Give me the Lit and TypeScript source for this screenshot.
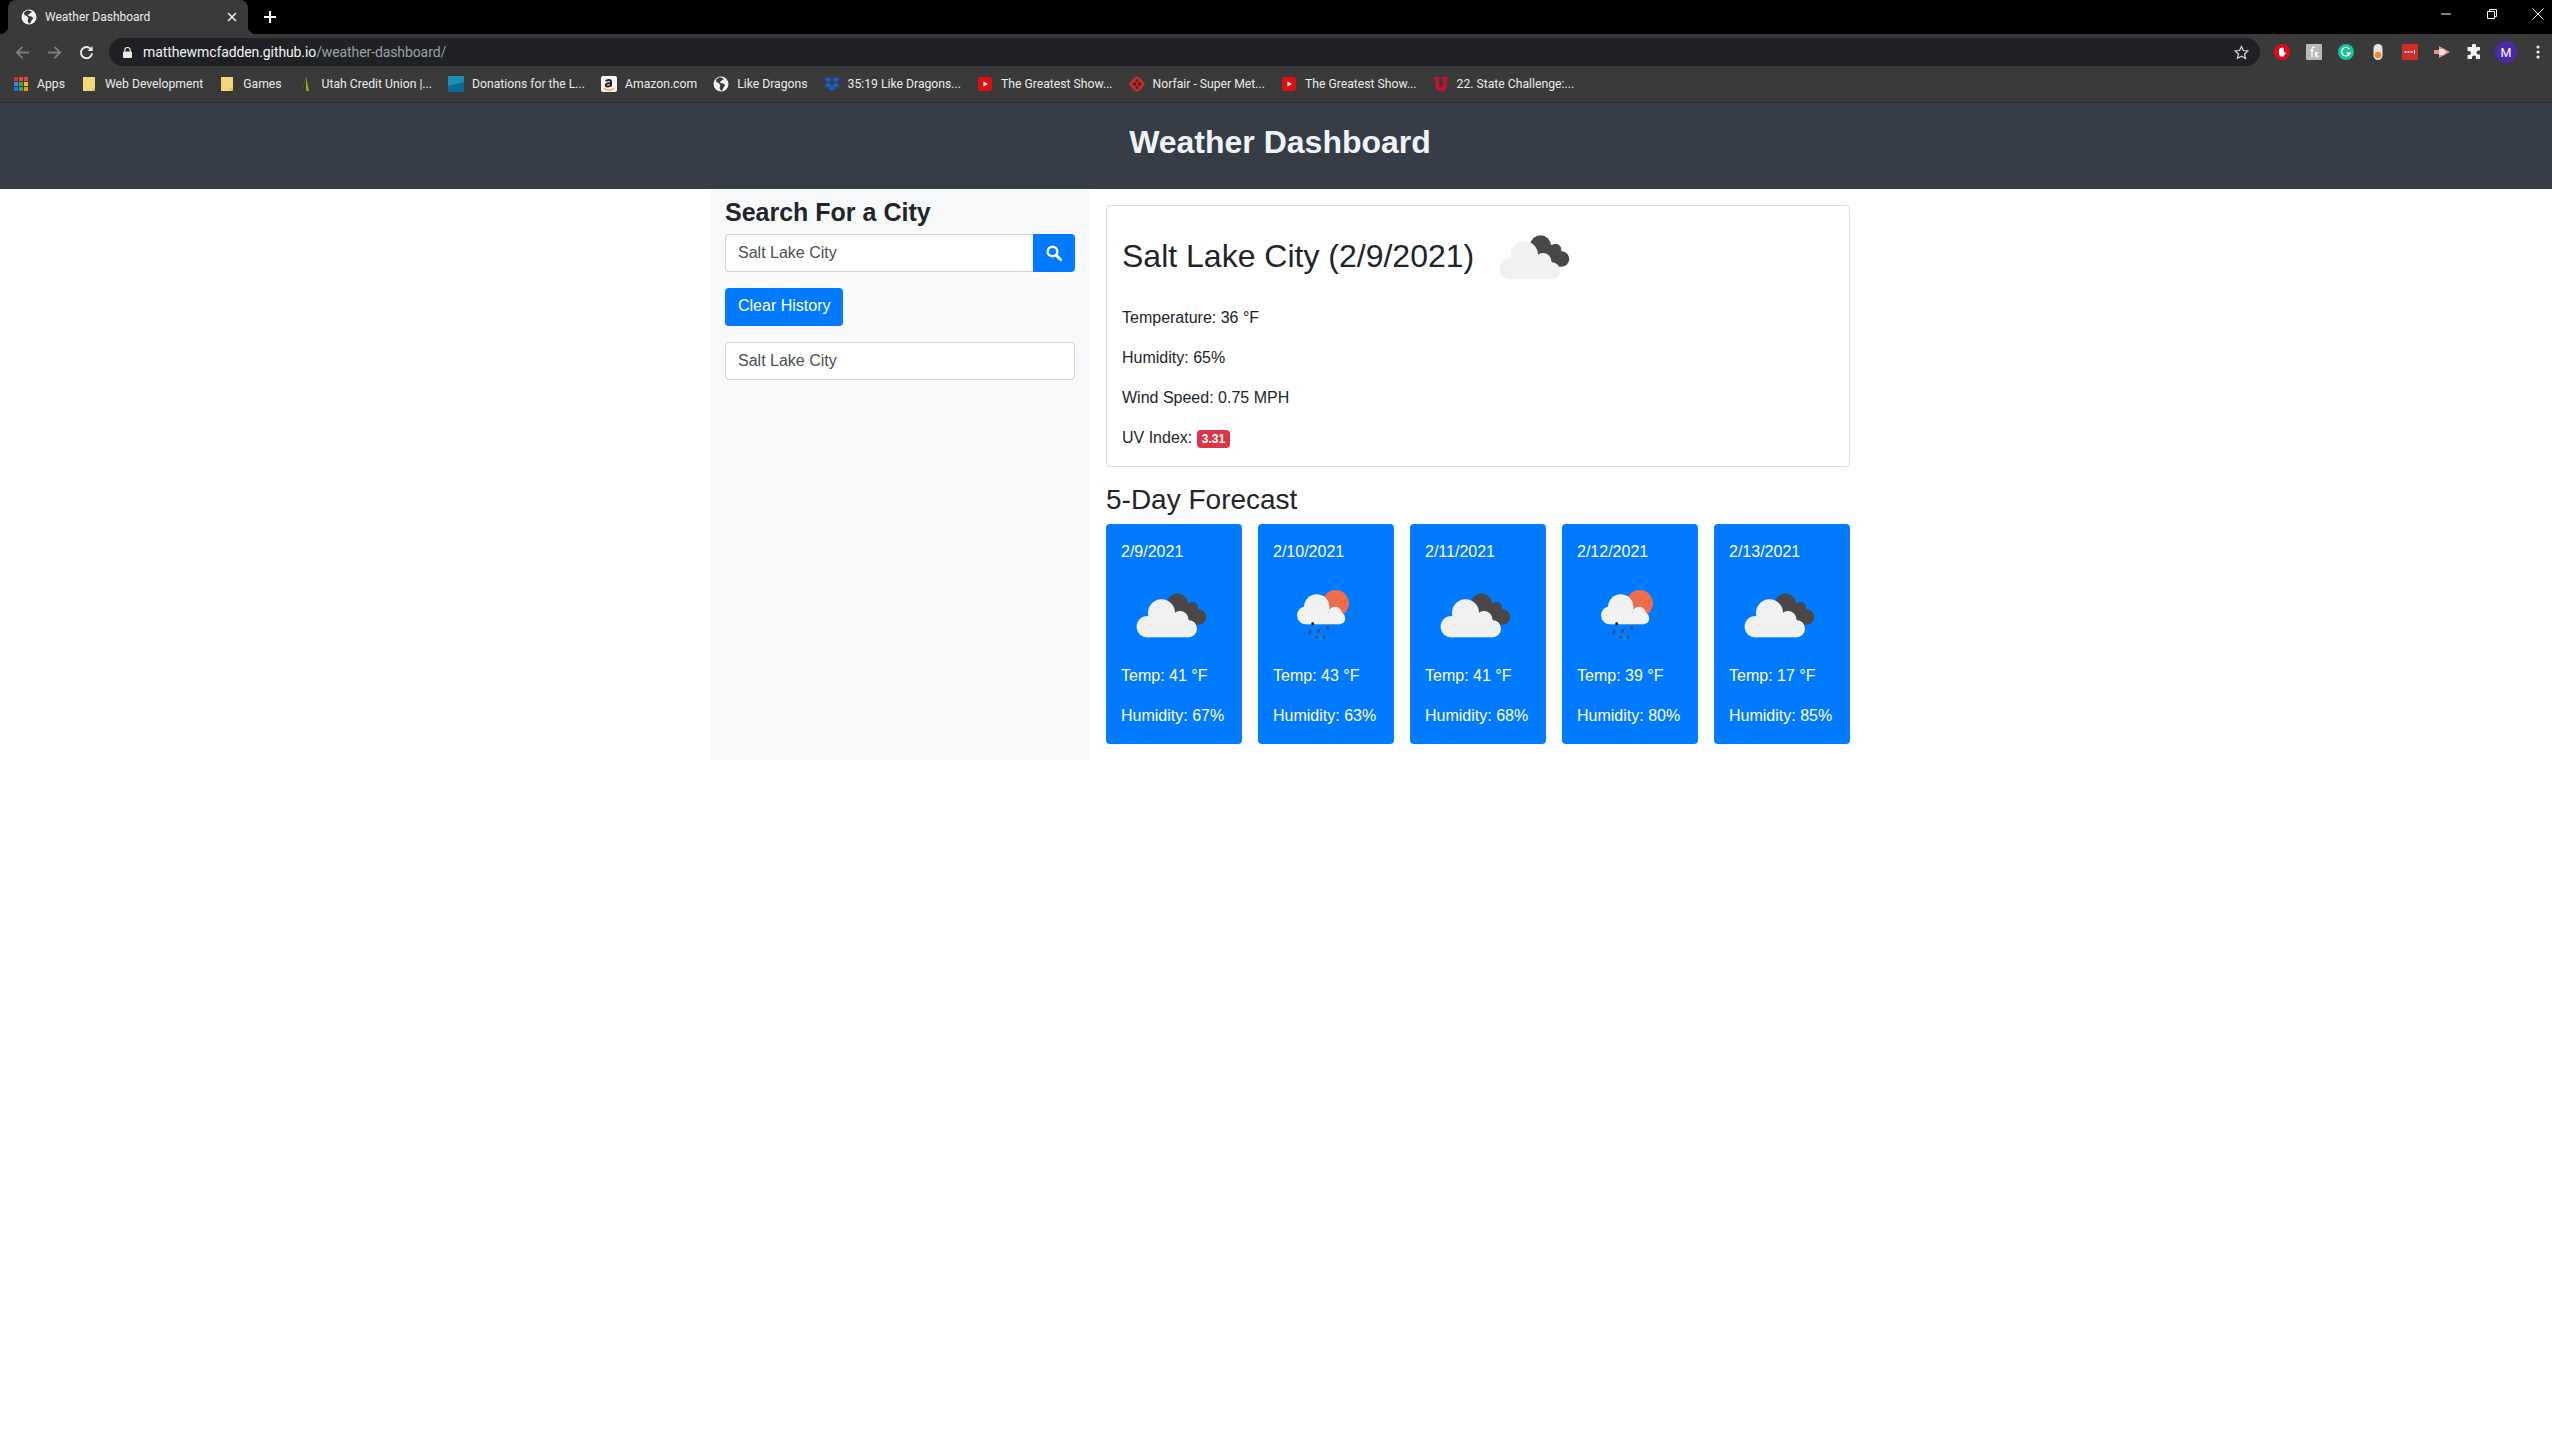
import { LitElement, html, css, svg } from 'lit';
import { customElement } from 'lit/decorators.js';

const globe = html`<svg class="fav" viewBox="0 0 16 16">
  <circle cx="8" cy="8" r="7.5" fill="#f1f3f4"></circle>
  <path fill="#3a3a3a" d="M6.5 1.2 3 3.5l.4 2.5 2.3 1 1.6 1.7L6.6 12l1.2 2.6 1.4-.2 1.6-3.4 1.4-1.6-1.6-1.8-3-.6-.8-1.2 1.6-.6.6-1.2 2-.8-1.2-1.2z"></path>
</svg>`;

const folder = html`<svg class="fav" viewBox="0 0 16 16">
  <path fill="#f6d67a" d="M2 1h12v13.5L11 15H2z"></path>
  <path fill="#e9bd55" d="M11 15l3-.5V12l-3 .5z"></path>
</svg>`;

const appsGrid = html`<svg class="fav" viewBox="0 0 16 16">
  <rect x="1" y="1" width="4" height="4" fill="#d93025"></rect><rect x="6" y="1" width="4" height="4" fill="#e8453c"></rect><rect x="11" y="1" width="4" height="4" fill="#ea4335"></rect>
  <rect x="1" y="6" width="4" height="4" fill="#4285f4"></rect><rect x="6" y="6" width="4" height="4" fill="#34a853"></rect><rect x="11" y="6" width="4" height="4" fill="#fbbc04"></rect>
  <rect x="1" y="11" width="4" height="4" fill="#1a73e8"></rect><rect x="6" y="11" width="4" height="4" fill="#34a853"></rect><rect x="11" y="11" width="4" height="4" fill="#f29900"></rect>
</svg>`;

const utah = html`<svg class="fav" viewBox="0 0 16 16"><path fill="#9aa02c" d="M8 0 11 15H4.5z"></path><path fill="#3c3c20" d="M8 0 8 15H4.5z"></path></svg>`;
const square = html`<svg class="fav" viewBox="0 0 16 16"><rect width="16" height="16" fill="#1b8fb8"></rect><path fill="#0b6d96" d="M0 10 16 6v10H0z"></path></svg>`;
const amazon = html`<svg class="fav" viewBox="0 0 16 16">
  <rect width="16" height="16" rx="2" fill="#f4f4f4"></rect>
  <path fill="none" stroke="#222" stroke-width="2" d="M5 5.2C6 3.4 10 3.4 10 5.6v5M10 7C6 7 4.6 8 4.8 9.4 5 11 8.6 10.8 10 9"></path>
  <path fill="none" stroke="#f90" stroke-width="1.2" d="M3 12.6c3 2 7 2 10 0"></path>
</svg>`;
const dropbox = html`<svg class="fav" viewBox="0 0 16 16"><path fill="#0f62d6" d="M4.2 1 8 3.6 4.2 6.2.4 3.6zM11.8 1l3.8 2.6-3.8 2.6L8 3.6zM4.2 6.6 8 9.2l-3.8 2.6L.4 9.2zM11.8 6.6l3.8 2.6-3.8 2.6L8 9.2zM8 10l3.6 2.4L8 15l-3.6-2.6z"></path></svg>`;
const youtube = html`<svg class="fav" viewBox="0 0 16 16"><rect x="1" y="1" width="14" height="14" rx="3" fill="#e01010"></rect><path fill="#fff" d="M6.5 5.5 11 8l-4.5 2.5z"></path></svg>`;
const norfair = html`<svg class="fav" viewBox="0 0 16 16"><path fill="#c22f2f" d="M8 0l4 3 4 5-4 5-4 3-4-3-4-5 4-5z"></path><circle cx="5.5" cy="8" r="2" fill="#6e1a1a"></circle><circle cx="10.5" cy="8" r="2" fill="#6e1a1a"></circle><circle cx="8" cy="4.5" r="1.6" fill="#6e1a1a"></circle><circle cx="8" cy="11.5" r="1.6" fill="#6e1a1a"></circle></svg>`;
const utes = html`<svg class="fav" viewBox="0 0 16 16"><path fill="#c4122f" d="M1 1h5.5v2H6v6c0 2.6 4 2.6 4 0V3h-.5V1H15v2h-1.2v6.4C13.8 13.4 11 15.5 8 15.5S2.2 13.4 2.2 9.4V3H1z"></path></svg>`;

const bookmarks = [
  { icon: folder, label: 'Web Development' },
  { icon: folder, label: 'Games' },
  { icon: utah, label: 'Utah Credit Union |...' },
  { icon: square, label: 'Donations for the L...' },
  { icon: amazon, label: 'Amazon.com' },
  { icon: globe, label: 'Like Dragons' },
  { icon: dropbox, label: '35:19 Like Dragons...' },
  { icon: youtube, label: 'The Greatest Show...' },
  { icon: norfair, label: 'Norfair - Super Met...' },
  { icon: youtube, label: 'The Greatest Show...' },
  { icon: utes, label: '22. State Challenge:...' },
];

const cloudsIcon = (light: string) => html`<svg class="wx" viewBox="0 0 100 84">
  ${svg`<g fill="#484848">
    <circle cx="56.500" cy="23.500" r="10.300"></circle>
    <circle cx="71.500" cy="27.500" r="5.800"></circle>
    <circle cx="77.500" cy="37" r="7.700"></circle>
    <path d="M50 18 72 24 82 33 77 44 60 48z"></path>
  </g>
  <g fill="${light}">
    <circle cx="40.500" cy="32.800" r="13.500"></circle>
    <circle cx="26.300" cy="46.600" r="10.700"></circle>
    <circle cx="59" cy="39.500" r="8.500"></circle>
    <circle cx="67.400" cy="48.700" r="8.600"></circle>
    <rect x="26" y="40" width="42" height="17.300"></rect>
  </g>`}
</svg>`;

const rainIcon = html`<svg class="wx" viewBox="0 0 100 84">
  ${svg`<circle cx="62.7" cy="23.3" r="13.3" fill="#ee6e4b"></circle>
  <g fill="#f1f1f1">
    <circle cx="43.7" cy="27" r="12.7"></circle>
    <circle cx="33" cy="35.3" r="9"></circle>
    <circle cx="62" cy="33.7" r="7"></circle>
    <circle cx="66.3" cy="38.3" r="6"></circle>
    <rect x="33" y="33" width="34" height="11.3"></rect>
  </g>
  <ellipse cx="39.7" cy="43.7" rx="1.5" ry="1.6" fill="#1c1c1c"></ellipse>
  <g fill="#45505c">
    <ellipse cx="37" cy="52" rx="1.5" ry="2.3" transform="rotate(20 37 52)"></ellipse>
    <ellipse cx="45.3" cy="51" rx="1.5" ry="2.3" transform="rotate(20 45.3 51)"></ellipse>
    <ellipse cx="54.7" cy="48" rx="1.4" ry="1.8" transform="rotate(20 54.7 48)"></ellipse>
    <ellipse cx="43.3" cy="57" rx="1.4" ry="1.6" transform="rotate(20 43.3 57)"></ellipse>
    <ellipse cx="51.3" cy="57" rx="1.5" ry="2.2" transform="rotate(20 51.3 57)"></ellipse>
  </g>`}
</svg>`;

const forecast = [
  { date: '2/9/2021', icon: cloudsIcon('#f1f1f1'), temp: 41, humidity: 67 },
  { date: '2/10/2021', icon: rainIcon, temp: 43, humidity: 63 },
  { date: '2/11/2021', icon: cloudsIcon('#f1f1f1'), temp: 41, humidity: 68 },
  { date: '2/12/2021', icon: rainIcon, temp: 39, humidity: 80 },
  { date: '2/13/2021', icon: cloudsIcon('#f1f1f1'), temp: 17, humidity: 85 },
];

@customElement('browser-chrome')
export class BrowserChrome extends LitElement {
  static styles = css`
    :host {
      display: block;
      font-family: Roboto, 'Liberation Sans', sans-serif;
      color: #e8eaed;
    }

    .tabstrip {
      display: flex;
      align-items: center;
      height: 34px;
      background: #000;
    }

    .tab {
      position: relative;
      display: flex;
      align-items: center;
      width: 240px;
      height: 34px;
      margin-left: 8px;
      padding: 0 0 0 13px;
      box-sizing: border-box;
      background: #3a3a3a;
      border-radius: 8px 8px 0 0;
      font-size: 12px;
      color: #e8eaed;
    }

    .tab::before,
    .tab::after {
      content: '';
      position: absolute;
      bottom: 0;
      width: 8px;
      height: 8px;
    }
    .tab::before {
      left: -8px;
      background: radial-gradient(circle at 0 0, #000 8px, #3a3a3a 8.5px);
    }
    .tab::after {
      right: -8px;
      background: radial-gradient(circle at 100% 0, #000 8px, #3a3a3a 8.5px);
    }

    .tab .fav { margin-right: 8px; }
    .tab-title { flex: 1; }
    .tab-close { width: 10px; height: 10px; margin-right: 11px; }
    .new-tab { width: 12px; height: 12px; margin-left: 16px; }

    .window-controls {
      display: flex;
      align-items: center;
      gap: 34px;
      margin-left: auto;
      margin-right: 8px;
      margin-top: -6px;
    }
    .window-controls svg { width: 12px; height: 12px; display: block; }

    .toolbar {
      display: flex;
      align-items: center;
      height: 35px;
      padding-top: 1px;
      box-sizing: border-box;
      background: #3a3a3a;
      padding-left: 15px;
    }

    .nav { width: 15px; height: 15px; margin-right: 17px; }
    .nav.last { margin-right: 15px; }

    .omnibox {
      display: flex;
      align-items: center;
      width: 2151px;
      height: 28px;
      padding: 0 11px 0 14px;
      box-sizing: border-box;
      background: #202124;
      border-radius: 14px;
      font-size: 14px;
      letter-spacing: -0.1px;
    }
    .lock { width: 9px; height: 11px; margin-right: 11px; }
    .host { color: #f1f3f4; }
    .path { color: #9aa0a6; }
    .star { width: 15px; height: 15px; margin-left: auto; }

    .extensions {
      display: flex;
      align-items: center;
      gap: 16px;
      margin-left: 14px;
    }
    .extensions svg { width: 16px; height: 16px; display: block; }
    .extensions svg.avatar { width: 22px; height: 22px; margin: 0 -3px; }

    .bookmarks {
      display: flex;
      align-items: center;
      height: 34px;
      box-sizing: border-box;
      padding: 0 0 2px 13px;
      background: #3a3a3a;
      border-bottom: 1px solid #2c2c2c;
      font-size: 12.2px;
      color: #e8eaed;
      white-space: nowrap;
    }
    .bookmark { display: flex; align-items: center; gap: 8px; margin-right: 16px; }

    .fav { width: 16px; height: 16px; flex-shrink: 0; display: block; }
  `;

  render() {
    return html`
      <div class="tabstrip">
        <div class="tab">
          ${globe}
          <span class="tab-title">Weather Dashboard</span>
          <svg class="tab-close" viewBox="0 0 10 10"><path d="M1 1l8 8M9 1l-8 8" stroke="#e8eaed" stroke-width="1.6"></path></svg>
        </div>
        <svg class="new-tab" viewBox="0 0 12 12"><path d="M6 0v12M0 6h12" stroke="#fff" stroke-width="2"></path></svg>
        <div class="window-controls">
          <svg viewBox="0 0 12 12"><path d="M1 6h10" stroke="#fff"></path></svg>
          <svg viewBox="0 0 12 12"><path d="M1.5 3.5h7v7h-7zM3.5 3.5v-2h7v7h-2" fill="none" stroke="#fff"></path></svg>
          <svg viewBox="0 0 12 12"><path d="M.5.5l11 11M11.5.5l-11 11" stroke="#fff"></path></svg>
        </div>
      </div>
      <div class="toolbar">
        <svg class="nav" viewBox="0 0 16 16"><path d="M15 8H2M8 2 2 8l6 6" fill="none" stroke="#7b7d80" stroke-width="2"></path></svg>
        <svg class="nav" viewBox="0 0 16 16"><path d="M1 8h13M8 2l6 6-6 6" fill="none" stroke="#7b7d80" stroke-width="2"></path></svg>
        <svg class="nav last" viewBox="0 0 16 16"><path d="M13.2 5A6 6 0 1 0 14 9" fill="none" stroke="#e8eaed" stroke-width="2"></path><path d="M14.6 1v5.4H9.2z" fill="#e8eaed"></path></svg>
        <div class="omnibox">
          <svg class="lock" viewBox="0 0 9 11"><path d="M1.8 5V3.2a2.7 2.7 0 0 1 5.4 0V5" fill="none" stroke="#e8eaed" stroke-width="1.2"></path><rect y="4.6" width="9" height="6.4" rx="1" fill="#e8eaed"></rect></svg>
          <span class="host">matthewmcfadden.github.io</span><span class="path">/weather-dashboard/</span>
          <svg class="star" viewBox="0 0 16 16"><path d="M8 1.5l2 4.4 4.8.5-3.6 3.2 1 4.7L8 11.9l-4.2 2.4 1-4.7L1.2 6.4 6 5.9z" fill="none" stroke="#d6d8da" stroke-width="1.3"></path></svg>
        </div>
        <div class="extensions">
          <svg viewBox="0 0 16 16"><circle cx="8" cy="8" r="8" fill="#e2091c"></circle><path d="M5 8V5h1v2-3h1.3v3-3.400h1.300V7 4.500H10V9l1.400-1 .6.6L9.600 12.500H6.500L5 10.500z" fill="#fff"></path></svg>
          <svg viewBox="0 0 16 16"><rect width="16" height="16" rx="1" fill="#b9b9b9"></rect><path d="M6 13V5c0-2 2-2 3-1.500M4 6.500h4M9.500 8v5M12 8l-2.500 2.500L12.500 13" fill="none" stroke="#fff" stroke-width="1.200"></path></svg>
          <svg viewBox="0 0 16 16"><circle cx="8" cy="8" r="8" fill="#15c39a"></circle><path d="M11.500 5.200A4.300 4.300 0 1 0 12 9H8.500" fill="none" stroke="#fff" stroke-width="1.300"></path></svg>
          <svg viewBox="0 0 16 16"><rect x="3.500" y="0" width="9" height="16" rx="4.500" fill="#e9e4df"></rect><circle cx="8" cy="11" r="3.200" fill="#ec8a32"></circle></svg>
          <svg viewBox="0 0 16 16"><rect width="16" height="16" fill="#d32d27"></rect><circle cx="3.500" cy="8" r="1" fill="#fff"></circle><circle cx="6.500" cy="8" r="1" fill="#fff"></circle><circle cx="9.500" cy="8" r="1" fill="#fff"></circle><path d="M12.500 6v4" stroke="#fff"></path></svg>
          <svg viewBox="0 0 16 16"><path d="M0 6h5V2l11 6-11 6v-4H0z" fill="#f28b8b"></path><path d="M5 5h4l3 3-3 3H5z" fill="#fbe3e3"></path></svg>
          <svg viewBox="0 0 16 16"><path d="M6 1.500a2 2 0 0 1 4 0V3h4v3.500h-1.500a2 2 0 0 0 0 4H14V15H10v-1.500a2 2 0 0 0-4 0V15H1.500v-4H3a2 2 0 0 0 0-4H1.500V3H6z" fill="#f1f3f4"></path></svg>
          <svg class="avatar" viewBox="0 0 22 22"><circle cx="11" cy="11" r="11" fill="#4c2aa6"></circle><text x="11" y="15.500" text-anchor="middle" font-size="12.500" fill="#fff" font-family="Roboto, sans-serif">M</text></svg>
          <svg viewBox="0 0 16 16"><circle cx="8" cy="3" r="1.600" fill="#e8eaed"></circle><circle cx="8" cy="8" r="1.600" fill="#e8eaed"></circle><circle cx="8" cy="13" r="1.600" fill="#e8eaed"></circle></svg>
        </div>
      </div>
      <div class="bookmarks">
        <div class="bookmark">${appsGrid}<span>Apps</span></div>
        ${bookmarks.map((b) => html`<div class="bookmark">${b.icon}<span>${b.label}</span></div>`)}
      </div>
    `;
  }
}

@customElement('app-root')
export class AppRoot extends LitElement {
  static styles = css`
    :host {
      display: block;
      min-height: 1432px;
      background: #fff;
      font-family: 'Liberation Sans', Arial, sans-serif;
      font-size: 16px;
      line-height: 1.5;
      color: #212529;
    }

    header {
      height: 86px;
      padding: 20px 0 0 8px;
      box-sizing: border-box;
      background: #363d47;
      color: #f1f3f6;
      text-align: center;
    }

    h1 {
      margin: 0;
      font-size: 32px;
      line-height: 1.2;
      font-weight: 700;
    }

    .row {
      display: grid;
      grid-template-columns: 380px 760px;
      justify-content: start;
      margin-left: 710px;
    }

    aside {
      padding: 8px 15px 16px 15px;
      background: #f8f9fa;
    }

    aside h2 {
      margin: 0 0 7px;
      font-size: 25px;
      line-height: 1.2;
      font-weight: 700;
    }

    .search {
      display: flex;
      height: 38px;
      margin-bottom: 16px;
    }

    .field {
      flex: 1;
      padding: 6px 12px;
      box-sizing: border-box;
      background: #fff;
      border: 1px solid #ced4da;
      border-right: none;
      border-radius: 4px 0 0 4px;
      color: #495057;
    }

    .search-btn {
      display: flex;
      align-items: center;
      justify-content: center;
      width: 42px;
      background: #007bff;
      border-radius: 0 4px 4px 0;
    }
    .search-btn svg { width: 16px; height: 16px; }

    .clear {
      display: block;
      width: max-content;
      height: 38px;
      padding: 6px 13px;
      margin-bottom: 16px;
      box-sizing: border-box;
      background: #007bff;
      color: #fff;
      border-radius: 4px;
    }

    .history {
      height: 38px;
      padding: 6px 12px;
      box-sizing: border-box;
      background: #fff;
      border: 1px solid #ced4da;
      border-radius: 4px;
      color: #495057;
    }

    main {
      padding: 16px 0 16px 16px;
    }

    .current {
      padding: 16px 15px;
      border: 1px solid #dfdfdf;
      border-radius: 4px;
    }

    .current-head {
      display: flex;
      align-items: flex-start;
      height: 84px;
    }

    .current-head h2 {
      margin: 15px 10px 0 0;
      font-size: 32px;
      line-height: 1.2;
      font-weight: 400;
    }

    .current p {
      margin: 0 0 16px;
    }
    .current p:last-child {
      margin-bottom: 0;
    }

    .badge {
      display: inline-block;
      padding: 3px 5px;
      font-size: 12px;
      font-weight: 700;
      line-height: 1;
      color: #fff;
      background: #dc3545;
      border-radius: 4px;
      vertical-align: baseline;
    }

    main h3 {
      margin: 16px 0 7px;
      font-size: 28px;
      line-height: 1.2;
      font-weight: 400;
    }

    .days {
      display: flex;
      gap: 16px;
    }

    .day {
      width: 136px;
      padding: 16px 15px;
      box-sizing: border-box;
      background: #007bff;
      color: #fff;
      border-radius: 4px;
      white-space: nowrap;
    }

    .day p {
      margin: 0 0 16px;
    }
    .day p:last-child {
      margin-bottom: 0;
    }

    .wx {
      display: block;
      width: 100px;
      height: 84px;
      flex-shrink: 0;
    }
  `;

  render() {
    return html`
      <browser-chrome></browser-chrome>
      <header><h1>Weather Dashboard</h1></header>
      <div class="row">
        <aside>
          <h2>Search For a City</h2>
          <div class="search">
            <div class="field">Salt Lake City</div>
            <div class="search-btn">
              <svg viewBox="0 0 16 16"><circle cx="6.500" cy="6.500" r="4.800" fill="none" stroke="#fff" stroke-width="2.400"></circle><path d="M10.200 10.200 15 15" stroke="#fff" stroke-width="2.800" stroke-linecap="round"></path></svg>
            </div>
          </div>
          <div class="clear">Clear History</div>
          <div class="history">Salt Lake City</div>
        </aside>
        <main>
          <section class="current">
            <div class="current-head">
              <h2>Salt Lake City (2/9/2021)</h2>
              ${cloudsIcon('#f1f1f1')}
            </div>
            <p>Temperature: 36 °F</p>
            <p>Humidity: 65%</p>
            <p>Wind Speed: 0.75 MPH</p>
            <p>UV Index: <span class="badge">3.31</span></p>
          </section>
          <h3>5-Day Forecast</h3>
          <div class="days">
            ${forecast.map(
              (d) => html`<div class="day">
                <p>${d.date}</p>
                ${d.icon}
                <p>Temp: ${d.temp} °F</p>
                <p>Humidity: ${d.humidity}%</p>
              </div>`,
            )}
          </div>
        </main>
      </div>
    `;
  }
}
